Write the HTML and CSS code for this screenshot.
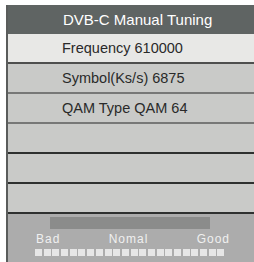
FILE: index.html
```html
<!DOCTYPE html>
<html lang="en">
<head>
    <meta charset="UTF-8">
    <title>DVB-C Manual Tuning</title>
    <link rel="stylesheet" href="styles.css">
</head>
<body>
    <div class="panel">
        <div class="panel-header">DVB-C Manual Tuning</div>
        <div class="row active">Frequency 610000</div>
        <div class="row">Symbol(Ks/s) 6875</div>
        <div class="row">QAM Type QAM 64</div>
        <div class="row dark-line"></div>
        <div class="row dark-line"></div>
        <div class="row dark-line"></div>
        <div class="signal">
            <div class="signal-bar"></div>
            <div class="signal-labels">
                <span>Bad</span>
                <span>Nomal</span>
                <span>Good</span>
            </div>
            <div class="signal-dots">
                <i></i><i></i><i></i><i></i><i></i><i></i><i></i><i></i><i></i><i></i><i></i>
                <i></i><i></i><i></i><i></i><i></i><i></i><i></i><i></i><i></i><i></i><i></i>
            </div>
        </div>
    </div>
</body>
</html>
```

FILE: styles.css
```css
body {
    margin: 0;
    background-color: #ffffff;
    font-family: 'Liberation Sans', Arial, sans-serif;
}

.panel {
    margin: 5px 0 0 6px;
    height: 257px;
    border-left: 2px solid #5a5c5b;
    background-color: #acacac;
    display: flex;
    flex-direction: column;
}

.panel-header {
    height: 29px;
    line-height: 29px;
    background-color: #5f6463;
    color: #ffffff;
    font-size: 15px;
    padding-left: 55px;
}

.row {
    height: 28px;
    line-height: 28px;
    background-color: #c9cac8;
    color: #2a2a2a;
    font-size: 14.5px;
    padding-left: 54px;
    border-bottom: 2px solid #777877;
}

.row.active {
    background-color: #e8e8e6;
    border-bottom-color: #4e4f4e;
}

.row.dark-line {
    border-bottom-color: #2e302f;
}

.signal {
    padding: 3px 0 0 27px;
}

.signal-bar {
    width: 160px;
    height: 12px;
    margin-left: 15px;
    background-color: #8b8c8b;
}

.signal-labels {
    width: 194px;
    display: flex;
    justify-content: space-between;
    margin-top: 3px;
    padding-left: 1px;
    color: #f0f0f0;
    font-size: 12px;
    letter-spacing: 1px;
    line-height: 14px;
}

.signal-dots {
    display: flex;
    gap: 1.7px;
    margin-top: 3px;
}

.signal-dots i {
    width: 7px;
    height: 7px;
    background-color: #e6e6e6;
}
```
